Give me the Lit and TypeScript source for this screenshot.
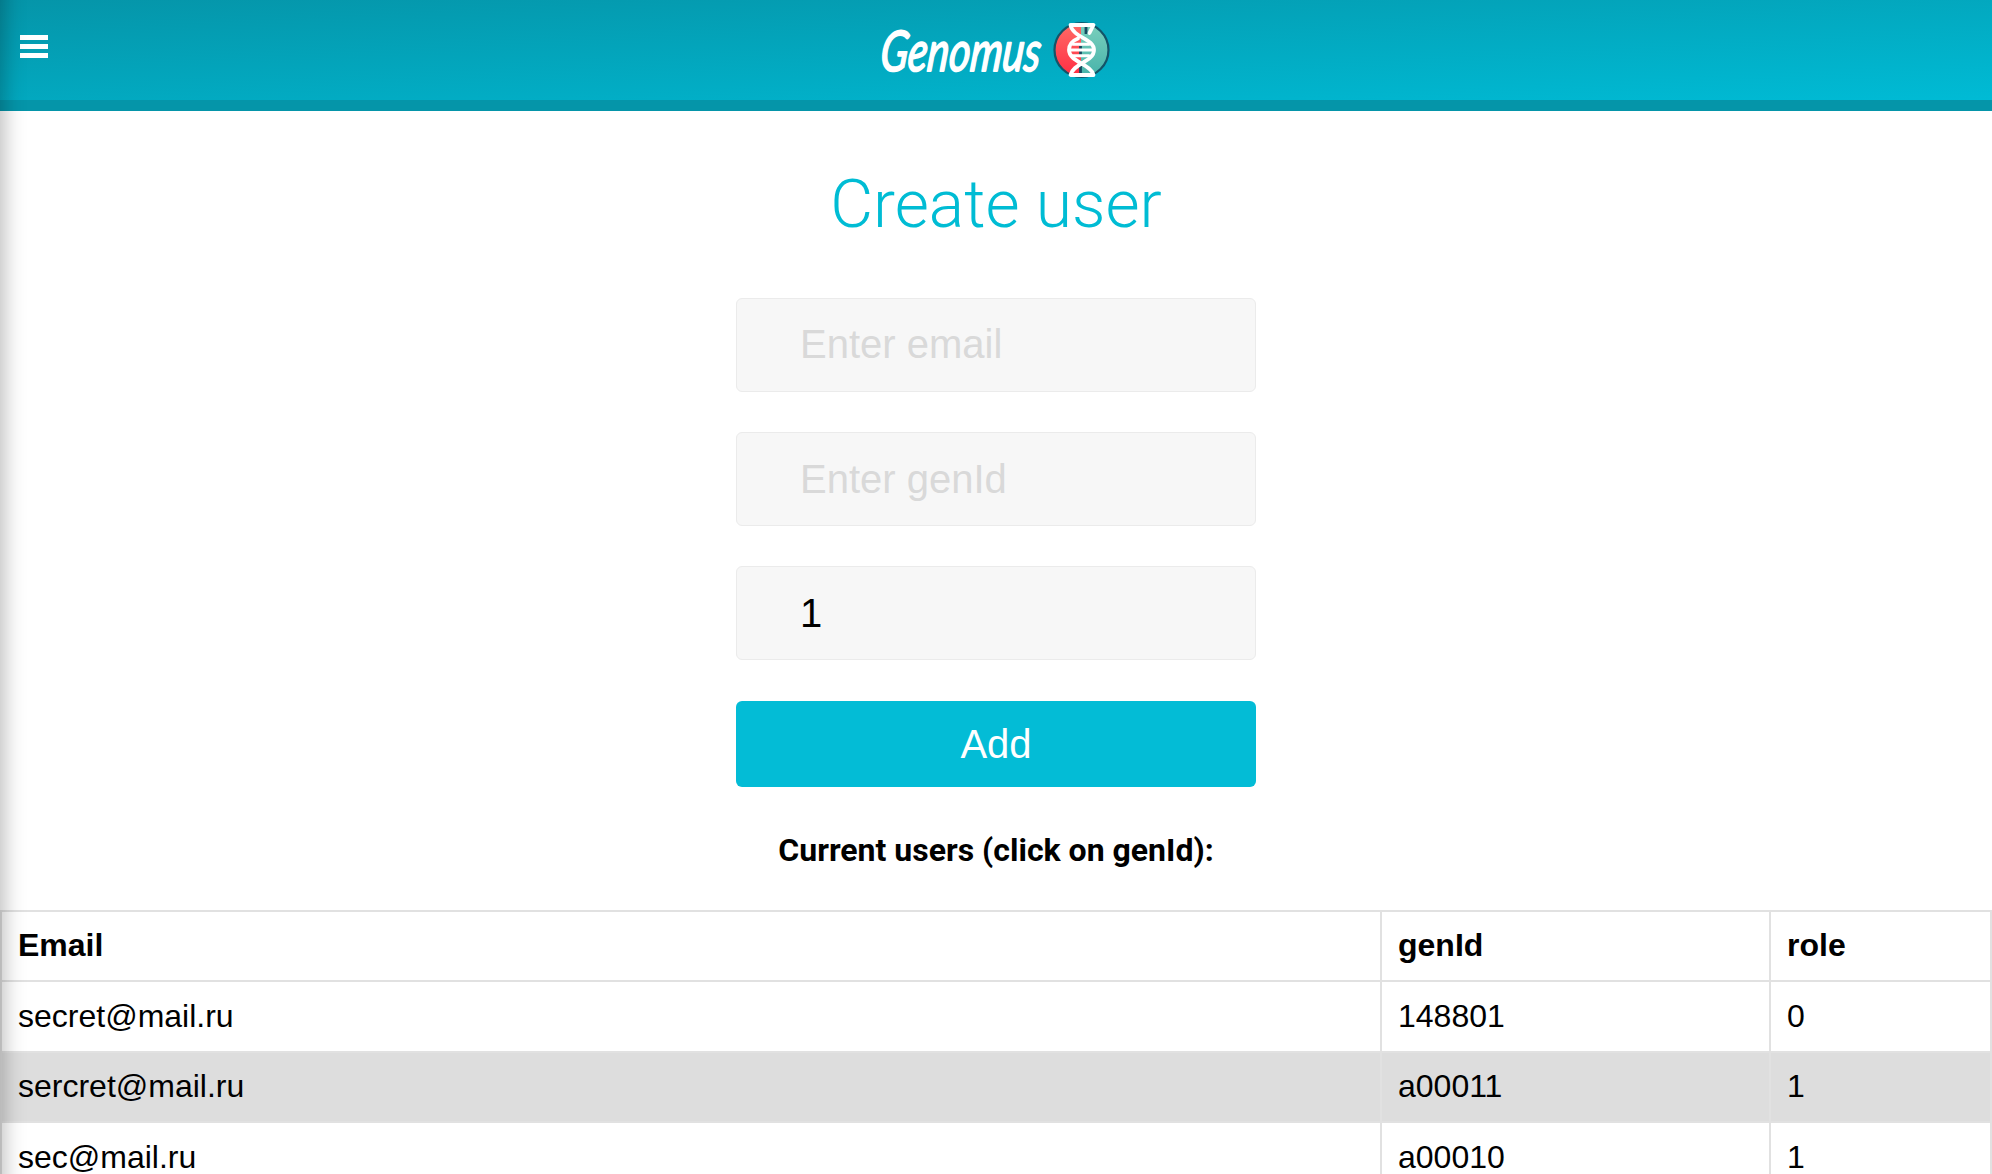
import { LitElement, html, css } from "lit";
import { customElement } from "lit/decorators.js";

interface User {
  email: string;
  genId: string;
  role: string;
}

const USERS: User[] = [
  { email: "secret@mail.ru", genId: "148801", role: "0" },
  { email: "sercret@mail.ru", genId: "a00011", role: "1" },
  { email: "sec@mail.ru", genId: "a00010", role: "1" },
];

@customElement("app-header")
class AppHeader extends LitElement {
  static styles = css`
    :host {
      display: block;
      flex: none;
    }
    .bar {
      box-sizing: border-box;
      height: 110.5px;
      padding: 0 20px;
      display: grid;
      grid-template-columns: 1fr auto 1fr;
      align-items: start;
      background: linear-gradient(to bottom right, #0595a9, #00bbd5);
      border-bottom: 11.5px solid #0595a9;
    }
    .menu {
      width: 28px;
      padding: 35px 0 0;
      border: 0;
      background: none;
      display: flex;
      flex-direction: column;
      gap: 4px;
    }
    .line {
      height: 5px;
      background: #fff;
    }
    .brand {
      display: flex;
      gap: 2px;
      padding-top: 11px;
    }
    .mark {
      margin-top: 10px;
    }
    .logotype {
      overflow: visible;
    }
    .word {
      font-family: Lato, sans-serif;
      font-style: italic;
      font-size: 56px;
      fill: #fff;
      stroke: #fff;
      stroke-width: 1.8px;
      stroke-linejoin: round;
    }
  `;

  render() {
    return html`
      <header class="bar">
        <button class="menu" aria-label="Menu">
          <span class="line"></span><span class="line"></span><span class="line"></span>
        </button>
        <div class="brand">
          <svg class="logotype" width="170" height="80" viewBox="0 0 170 80">
            <text
              class="word"
              transform="translate(-2 59.5) skewX(-6)"
              textLength="160"
              lengthAdjust="spacingAndGlyphs"
            >Genomus</text>
          </svg>
          <svg class="mark" width="58" height="58" viewBox="0 0 58 58">
            <defs>
              <linearGradient id="red" x1="0" y1="0" x2="0" y2="1">
                <stop offset="0" stop-color="#ff6b66" />
                <stop offset="1" stop-color="#ff2d43" />
              </linearGradient>
              <linearGradient id="mint" x1="0" y1="0" x2="0" y2="1">
                <stop offset="0" stop-color="#7bd0bd" />
                <stop offset="1" stop-color="#47b3aa" />
              </linearGradient>
            </defs>
            <path d="M28 2a27 27 0 0 0 0 54z" fill="url(#red)" />
            <path d="M28 2a27 27 0 0 1 0 54z" fill="url(#mint)" />
            <circle cx="28.5" cy="29" r="27" fill="none" stroke="#145468" stroke-width="2.2" />
            <path d="M33 6v7M27.5 25v9M27.500 45v7" fill="none" stroke="#174a60" stroke-width="2.8" />
            <g fill="none" stroke="#fff" stroke-width="3.8" stroke-linecap="round" stroke-linejoin="round">
              <path d="M36.500 12L40.500 4H17.500C20 17 41 17 41 29C41 41 20 42 17.500 54H40.500C38 43 16 41 16 29C16 22 20 19.500 25 17.500" />
              <path d="M20 23.200H36M17 29H40M20 34.800H36" stroke-width="3" />
            </g>
          </svg>
        </div>
      </header>
    `;
  }
}

@customElement("user-form")
class UserForm extends LitElement {
  static styles = css`
    :host {
      display: block;
      flex: none;
    }
    .form {
      display: flex;
      flex-direction: column;
      align-items: center;
    }
    .title {
      margin: 54px 0 0;
      font: 300 66px/80px Roboto, sans-serif;
      color: #00bcd4;
    }
    .field {
      box-sizing: border-box;
      width: 520px;
      height: 94px;
      margin: 0 0 40.3px;
      padding: 0 62px 0 63px;
      border: 1.6px solid #ebebeb;
      border-radius: 6px;
      background: #f7f7f7;
      color: #000;
      font: 40px "Liberation Sans", Arial, sans-serif;
      outline: none;
    }
    .title + .field {
      margin-top: 53.3px;
    }
    .field::placeholder {
      color: #d9d9d9;
      opacity: 1;
    }
    .submit {
      width: 520px;
      height: 86px;
      padding: 1px 0 0;
      border: 0;
      border-radius: 6px;
      background: #03bcd6;
      color: #fff;
      font: 40px "Liberation Sans", Arial, sans-serif;
    }
  `;

  render() {
    return html`
      <form class="form">
        <h1 class="title">Create user</h1>
        <input class="field" placeholder="Enter email" />
        <input class="field" placeholder="Enter genId" />
        <input class="field" .value=${"1"} />
        <button class="submit" type="button">Add</button>
      </form>
    `;
  }
}

@customElement("user-table")
class UserTable extends LitElement {
  static styles = css`
    :host {
      display: block;
      flex: none;
    }
    .table {
      width: 100%;
      border-collapse: collapse;
      table-layout: fixed;
      font: 32px/36px "Liberation Sans", Arial, sans-serif;
      color: #000;
    }
    .col-id {
      width: 389px;
    }
    .col-role {
      width: 221px;
    }
    .cell {
      box-sizing: border-box;
      height: 70.5px;
      padding: 0 16px 1px;
      border: 2px solid #e1e1e1;
      text-align: left;
      vertical-align: middle;
    }
    .row:nth-child(even) {
      background: #ddd;
    }
    .row:nth-child(even) .cell {
      border-top-color: #ddd;
    }
  `;

  render() {
    return html`
      <table class="table">
        <colgroup>
          <col />
          <col class="col-id" />
          <col class="col-role" />
        </colgroup>
        <thead>
          <tr>
            <th class="cell">Email</th>
            <th class="cell">genId</th>
            <th class="cell">role</th>
          </tr>
        </thead>
        <tbody>
          ${USERS.map(
            (u) => html`<tr class="row">
              <td class="cell">${u.email}</td>
              <td class="cell">${u.genId}</td>
              <td class="cell">${u.role}</td>
            </tr>`
          )}
        </tbody>
      </table>
    `;
  }
}

@customElement("app-root")
class AppRoot extends LitElement {
  static styles = css`
    :host {
      display: block;
    }
    .page {
      position: relative;
      display: flex;
      flex-direction: column;
      height: 1174px;
      overflow: hidden;
      background: #fff;
    }
    .caption {
      margin: 44px 0 41px;
      text-align: center;
      font: 700 32px/38px Roboto, sans-serif;
      color: #000;
    }
    .edge {
      position: absolute;
      inset: -30px auto -30px -20px;
      width: 20px;
      box-shadow: 0 0 25px rgba(0, 0, 0, 0.38);
      pointer-events: none;
    }
  `;

  render() {
    return html`
      <div class="page">
        <app-header></app-header>
        <user-form></user-form>
        <p class="caption">Current users (click on genId):</p>
        <user-table></user-table>
        <div class="edge"></div>
      </div>
    `;
  }
}
